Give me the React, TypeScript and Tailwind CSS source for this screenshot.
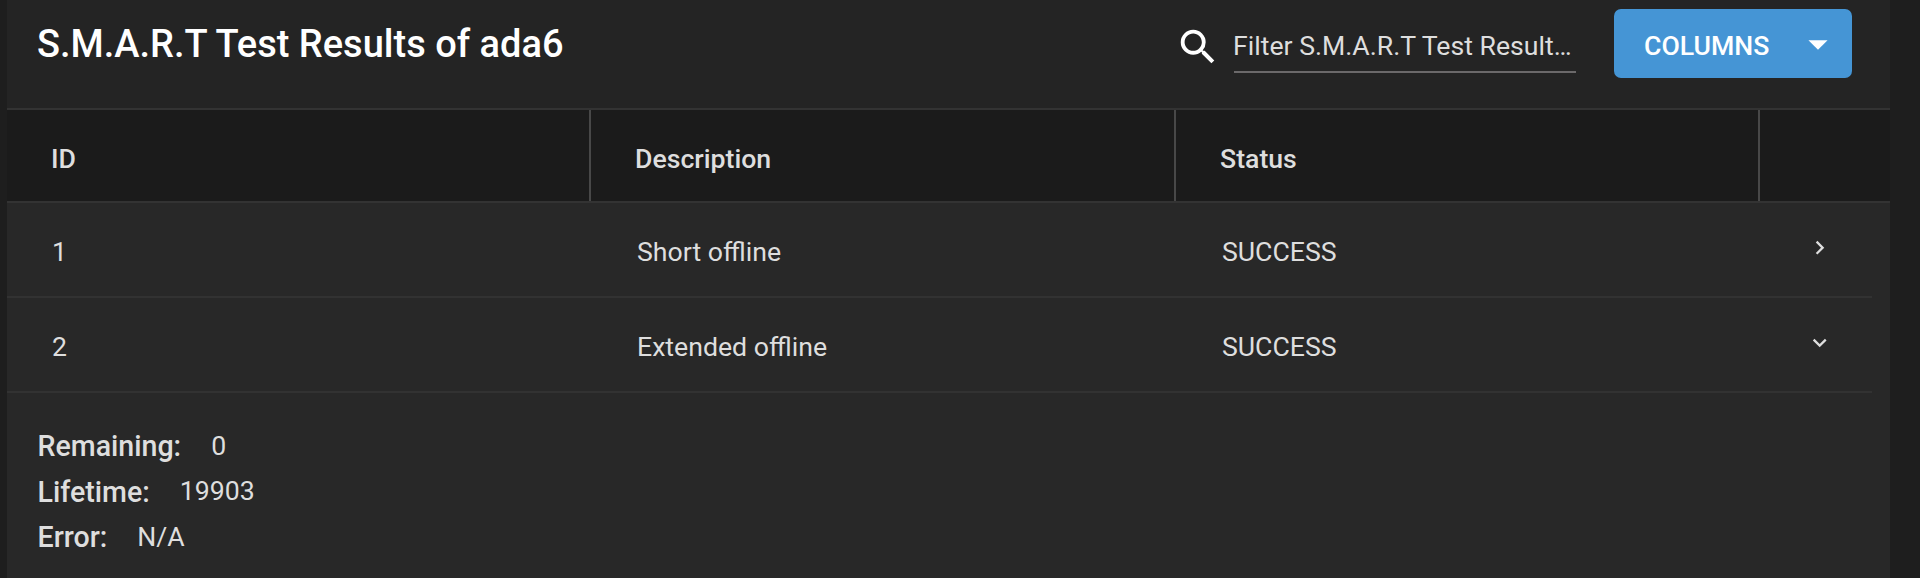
import { MdArrowDropDown, MdChevronRight, MdExpandMore, MdSearch } from 'react-icons/md';

const headers = [
  { label: 'ID', className: 'w-[584px] pl-[44px]' },
  { label: 'Description', className: 'w-[585px] pl-[44px]' },
  { label: 'Status', className: 'w-[584px] pl-[44px]' },
];

const rows = [
  { id: '1', description: 'Short offline', status: 'SUCCESS', expanded: false },
  { id: '2', description: 'Extended offline', status: 'SUCCESS', expanded: true },
];

const details = [
  { label: 'Remaining:', value: '0' },
  { label: 'Lifetime:', value: '19903' },
  { label: 'Error:', value: 'N/A' },
];

export default function App() {
  return (
    <div className="h-[578px] w-[1920px] overflow-hidden bg-[#1e1e1e] pl-[7px] font-['Roboto',sans-serif] text-[26.67px] text-[#dedede]">
      <main className="flex h-full w-[1883px] flex-col bg-[#282828]">
        <Toolbar />

        {/* Column headers */}
        <div className="flex h-[95px] shrink-0 border-y-2 border-[#333333] bg-[#1b1b1b] font-medium">
          {headers.map((header) => (
            <div
              key={header.label}
              className={`flex items-center border-r-2 border-[#484848] pt-[7px] ${header.className}`}
            >
              {header.label}
            </div>
          ))}
        </div>

        {rows.map((row) => (
          <ResultRow key={row.id} row={row} />
        ))}

        {/* Details of the expanded row */}
        <dl className="pl-[30.5px] pt-[31px]">
          {details.map((detail) => (
            <div key={detail.label} className="flex h-[45.5px] items-center">
              <dt className="mr-[30px] text-[28.57px] font-medium">{detail.label}</dt>
              <dd className="pb-0.5">{detail.value}</dd>
            </div>
          ))}
        </dl>
      </main>
    </div>
  );
}

function Toolbar() {
  return (
    <header className="flex h-[108px] shrink-0 items-start bg-[#242424] pl-[30px] pr-[38px]">
      <h1 className="mt-[22px] text-[38px] font-medium leading-[45px] text-white">
        S.M.A.R.T Test Results of ada6
      </h1>
      <div className="ml-auto flex items-start">
        <MdSearch className="mr-[13px] mt-6 text-white" size={46} />
        <div className="mr-[38px] mt-[19px] h-[54px] w-[342px] whitespace-nowrap border-b-2 border-[#6b696a] leading-[55px] -indent-px">
          Filter S.M.A.R.T Test Result…
        </div>
        <button className="mt-[9px] flex h-[69px] w-[238px] items-center rounded-[7px] bg-[#4595d5] pl-[30px] font-medium text-white">
          <span className="mt-1">COLUMNS</span>
          <MdArrowDropDown className="ml-auto mr-[11px]" size={46} />
        </button>
      </div>
    </header>
  );
}

function ResultRow({ row }: { row: (typeof rows)[0] }) {
  const Chevron = row.expanded ? MdExpandMore : MdChevronRight;

  return (
    <div className="mr-[18px] flex h-[95px] shrink-0 items-center border-b-2 border-[#323232] pl-[45px]">
      <span className="w-[585px] pt-1">{row.id}</span>
      <span className="w-[585px] pt-1">{row.description}</span>
      <span className="w-[584px] pt-1">{row.status}</span>
      <Chevron className="mb-1" size={27.4} />
    </div>
  );
}
